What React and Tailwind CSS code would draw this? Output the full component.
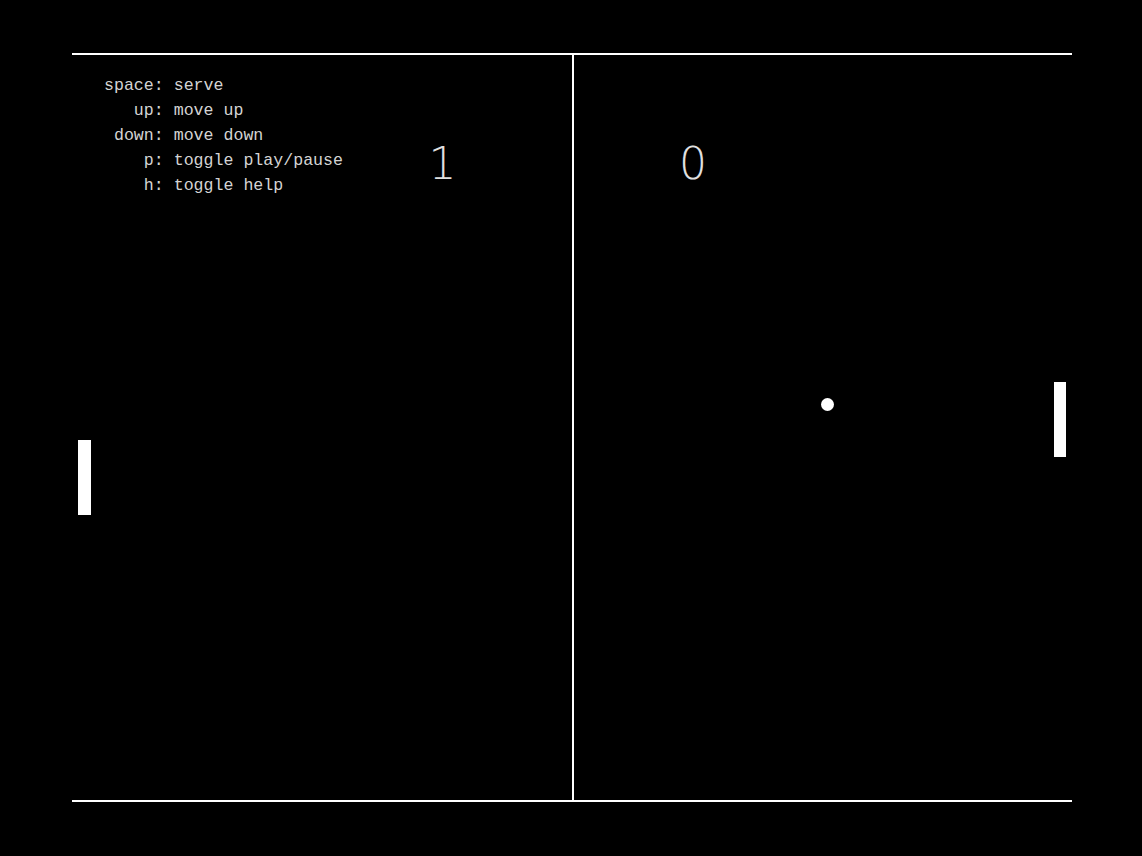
import React from 'react';

const help = [
  ['space', 'serve'],
  ['up', 'move up'],
  ['down', 'move down'],
  ['p', 'toggle play/pause'],
  ['h', 'toggle help'],
];

export default function App() {
  return (
    <div className="min-h-screen w-full bg-black overflow-hidden">
      <div className="relative mx-auto mt-[53px] h-[749px] w-[1000px] translate-x-[1px] border-y-2 border-white flex">
        {/* left half */}
        <div className="w-[500px] shrink-0 flex items-start">
          <div className="ml-[32px] mt-[18px] w-[300px] shrink-0 font-['Liberation_Mono','Courier_New',monospace] text-[16.6px] leading-[25px] text-[#d4d4d4] whitespace-pre">
            {help.map(([k, v]) => (
              <div key={k}>{(k + ':').padStart(6, ' ') + ' ' + v}</div>
            ))}
          </div>
          <div className="ml-[18.5px] mt-[87px] w-[40px] text-center font-['DejaVu_Sans',sans-serif] font-extralight text-[44px] leading-[44px] text-[#e0e0e0]">
            1
          </div>
        </div>

        {/* net */}
        <div className="w-[2px] shrink-0 bg-white" />

        {/* right half */}
        <div className="flex-1 flex items-start">
          <div className="ml-[99px] mt-[87px] w-[40px] text-center font-['DejaVu_Sans',sans-serif] font-extralight text-[44px] leading-[44px] text-[#e0e0e0]">
            0
          </div>
        </div>

        {/* paddles and ball */}
        <div className="absolute left-[6px] top-[385px] h-[75px] w-[12.5px] bg-white" />
        <div className="absolute right-[6px] top-[327px] h-[75px] w-[12.5px] bg-white" />
        <div className="absolute left-[749px] top-[342.5px] h-[13px] w-[13px] rounded-full bg-white" />
      </div>
    </div>
  );
}
